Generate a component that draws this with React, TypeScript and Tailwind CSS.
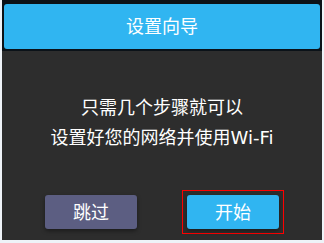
export default function App() {
  return (
    <div
      className="w-[324px] h-[243px] bg-[#eef3f8] px-[2px] pb-[3px] overflow-hidden"
      style={{ fontFamily: '"DejaVu Sans", "Noto Sans CJK SC", sans-serif' }}
    >
      <div className="flex flex-col h-full bg-[#2d2d2d]">
        {/* cabecera */}
        <div className="bg-[#0b1218] px-[2px] pt-[4px] pb-[2px]">
          <div className="h-[45px] bg-[#30b5f1] rounded-[3px] flex items-center justify-center text-white text-[18px]">
            设置向导
          </div>
        </div>

        {/* texto */}
        <div className="flex flex-col items-center text-white text-[18px] leading-[30px] pt-[42px]">
          <p>只需几个步骤就可以</p>
          <p>设置好您的网络并使用Wi-Fi</p>
        </div>

        {/* botones */}
        <div className="flex justify-center gap-[50px] mt-[42px]">
          <button className="w-[92px] h-[34px] bg-[#5c5e82] rounded-[3px] text-white text-[18px] shadow-[0_2px_4px_rgba(0,0,0,0.4)]">
            跳过
          </button>
          <div className="-m-[5px] p-[4px] border border-[#ff0000]">
            <button className="w-[92px] h-[34px] bg-[#30b5f1] rounded-[3px] text-white text-[18px] shadow-[0_2px_4px_rgba(0,0,0,0.4)]">
              开始
            </button>
          </div>
        </div>
      </div>
    </div>
  );
}
